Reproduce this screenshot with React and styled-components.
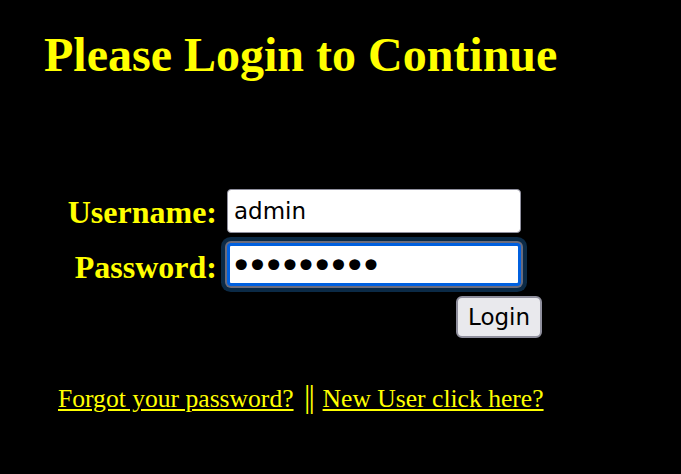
import React from 'react';
import styled, { createGlobalStyle } from 'styled-components';

const GlobalStyle = createGlobalStyle`
  html, body {
    margin: 0;
    padding: 0;
    background: #000;
  }
  body {
    font-family: "Liberation Serif", "Times New Roman", serif;
  }
`;

const Page = styled.div`
  min-height: 474px;
  background: #000;
  color: #ffff00;
  padding: 27px 0 0 44px;
  box-sizing: border-box;
`;

const Title = styled.h1`
  margin: 0;
  font-size: 48px;
  line-height: 55px;
  font-weight: 700;
  color: #ffff00;
`;

const LoginForm = styled.form`
  display: grid;
  grid-template-columns: 148px 315px;
  column-gap: 10px;
  row-gap: 10px;
  align-items: center;
  margin: 107px 0 0 25px;
`;

const Label = styled.label`
  justify-self: end;
  font-size: 32px;
  font-weight: 700;
  color: #ffff00;
  line-height: 36px;
  white-space: nowrap;
  margin-top: ${({ $shift }) => $shift || 0}px;
`;

const Field = styled.input`
  box-sizing: border-box;
  width: 294px;
  height: ${({ $focused }) => ($focused ? 43 : 44)}px;
  padding: ${({ $dots }) => ($dots ? '3px 0 0 0' : '0 6px')};
  font-family: "DejaVu Sans", Verdana, sans-serif;
  font-size: ${({ $dots }) => ($dots ? 38 : 23)}px;
  color: #000;
  background: #fff;
  border: ${({ $focused }) => ($focused ? '3px solid #0060df' : '1px solid #8f8f9d')};
  border-radius: 4px;
  box-shadow: ${({ $focused }) =>
    $focused ? '0 0 0 2px #6c6c7c, 0 0 0 6px #0b2a46' : 'none'};
  outline: none;
  letter-spacing: ${({ $dots }) => ($dots ? '-6.2px' : 'normal')};
`;

const ButtonCell = styled.div`
  grid-column: 2;
  display: flex;
  justify-content: flex-end;
`;

const LoginButton = styled.button`
  box-sizing: border-box;
  width: 86px;
  height: 42px;
  padding: 0;
  font-family: "DejaVu Sans", Verdana, sans-serif;
  font-size: 23px;
  color: #000;
  background: #e9e9ed;
  border: 2px solid #8f8f9d;
  border-radius: 6px;
`;

const Links = styled.div`
  margin: 46px 0 0 14px;
  font-size: 25.6px;
  line-height: 29px;
  color: #ffff00;
`;

const Link = styled.a`
  color: #ffff00;
  text-decoration: underline;
  cursor: pointer;
`;

const Separator = styled.span`
  display: inline-block;
  font-size: 32px;
  line-height: 20px;
  letter-spacing: -1.8px;
  margin: 0 3px 0 4px;
`;

const App = () => {
  return (
    <Page>
      <GlobalStyle />
      <Title>Please Login to Continue</Title>

      <LoginForm onSubmit={(e) => e.preventDefault()}>
        <Label htmlFor="username" $shift={2}>Username:</Label>
        <Field id="username" type="text" defaultValue="admin" />

        <Label htmlFor="password" $shift={4}>Password:</Label>
        <Field id="password" type="password" defaultValue="123456789" $focused $dots />

        <ButtonCell>
          <LoginButton type="submit">Login</LoginButton>
        </ButtonCell>
      </LoginForm>

      <Links>
        <Link>Forgot your password?</Link> <Separator>||</Separator> <Link>New User click here?</Link>
      </Links>
    </Page>
  );
};

export default App;
